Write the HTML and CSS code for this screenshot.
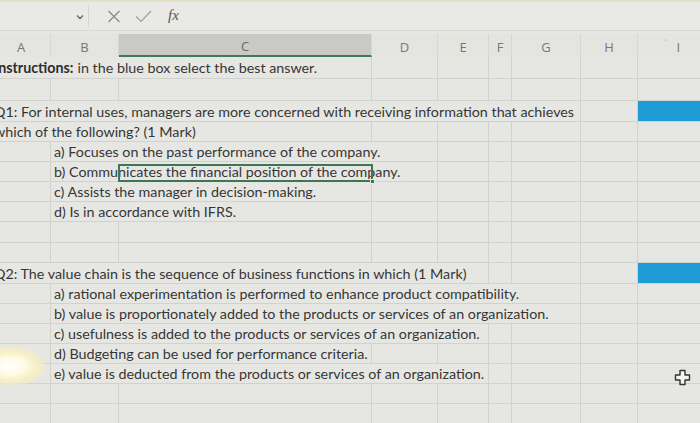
FILE: index.html
```html
<!DOCTYPE html>
<html>
<head>
<meta charset="utf-8">
<link rel="stylesheet" href="styles.css">
</head>
<body>
<div class="screen">
  <div class="fbar">
    <div class="namebox"><span class="chev"><svg width="8" height="6" viewBox="0 0 8 6"><path d="M1 1.5 L4 4.5 L7 1.5" fill="none" stroke="#666" stroke-width="1.3"/></svg></span></div>
    <div class="fsep"></div>
    <div class="ficons">
      <svg class="ico" width="14" height="13" viewBox="0 0 14 13"><path d="M1.5 1 L12.5 12 M12.5 1 L1.5 12" stroke="#8a8a8a" stroke-width="1.2" fill="none"/></svg>
      <svg class="ico" width="17" height="13" viewBox="0 0 17 13"><path d="M1 6.5 L6 11.5 L16 1" stroke="#a0a0a0" stroke-width="1.2" fill="none"/></svg>
      <span class="fx">fx</span>
    </div>
  </div>
  <div class="hdr">
    <div class="h">A</div><div class="h">B</div><div class="h sel">C</div><div class="h">D</div><div class="h">E</div><div class="h">F</div><div class="h">G</div><div class="h">H</div><div class="h"><span class="tick">&#8216;</span>I</div>
  </div>
  <div class="sheet">
    <div class="row r22"><div class="c ac pa"><b>Instructions:</b> in the blue box select the best answer.</div><div class="c"></div><div class="c"></div><div class="c"></div><div class="c"></div><div class="c"></div><div class="c"></div></div>
    <div class="row r22"><div class="c"></div><div class="c"></div><div class="c"></div><div class="c"></div><div class="c"></div><div class="c"></div><div class="c"></div><div class="c"></div><div class="c"></div></div>
    <div class="row r21"><div class="c ag pa">Q1: For internal uses, managers are more concerned with receiving information that achieves</div><div class="c"></div><div class="c blue"></div></div>
    <div class="row r20"><div class="c ac pa">which of the following? (1 Mark)</div><div class="c"></div><div class="c"></div><div class="c"></div><div class="c"></div><div class="c"></div><div class="c"></div></div>
    <div class="row r20"><div class="c"></div><div class="c bd pb">a) Focuses on the past performance of the company.</div><div class="c"></div><div class="c"></div><div class="c"></div><div class="c"></div><div class="c"></div></div>
    <div class="row r20"><div class="c"></div><div class="c bd pb">b) Communicates the financial position of the company.</div><div class="selbox"><span class="handle"></span></div><div class="c"></div><div class="c"></div><div class="c"></div><div class="c"></div><div class="c"></div></div>
    <div class="row r20"><div class="c"></div><div class="c bc pb">c) Assists the manager in decision-making.</div><div class="c"></div><div class="c"></div><div class="c"></div><div class="c"></div><div class="c"></div><div class="c"></div></div>
    <div class="row r20"><div class="c"></div><div class="c bc pb">d) Is in accordance with IFRS.</div><div class="c"></div><div class="c"></div><div class="c"></div><div class="c"></div><div class="c"></div><div class="c"></div></div>
    <div class="row r21"><div class="c"></div><div class="c"></div><div class="c"></div><div class="c"></div><div class="c"></div><div class="c"></div><div class="c"></div><div class="c"></div><div class="c"></div></div>
    <div class="row r20"><div class="c"></div><div class="c"></div><div class="c"></div><div class="c"></div><div class="c"></div><div class="c"></div><div class="c"></div><div class="c"></div><div class="c"></div></div>
    <div class="row r21"><div class="c ae pa">Q2: The value chain is the sequence of business functions in which (1 Mark)</div><div class="c"></div><div class="c"></div><div class="c"></div><div class="c blue"></div></div>
    <div class="row r20"><div class="c"></div><div class="c bg pb">a) rational experimentation is performed to enhance product compatibility.</div><div class="c"></div><div class="c"></div></div>
    <div class="row r20"><div class="c"></div><div class="c bg pb">b) value is proportionately added to the products or services of an organization.</div><div class="c"></div><div class="c"></div></div>
    <div class="row r20"><div class="c"></div><div class="c be pb">c) usefulness is added to the products or services of an organization.</div><div class="c"></div><div class="c"></div><div class="c"></div><div class="c"></div></div>
    <div class="row r20"><div class="c"></div><div class="c bc pb">d) Budgeting can be used for performance criteria.</div><div class="c"></div><div class="c"></div><div class="c"></div><div class="c"></div><div class="c"></div><div class="c"></div></div>
    <div class="row r20"><div class="c"></div><div class="c be pb">e) value is deducted from the products or services of an organization.</div><div class="c"></div><div class="c"></div><div class="c"></div><div class="c"></div></div>
    <div class="row r20"><div class="c"></div><div class="c"></div><div class="c"></div><div class="c"></div><div class="c"></div><div class="c"></div><div class="c"></div><div class="c"></div><div class="c"></div></div>
    <div class="row r20"><div class="c"></div><div class="c"></div><div class="c"></div><div class="c"></div><div class="c"></div><div class="c"></div><div class="c"></div><div class="c"></div><div class="c"></div></div>
    <div class="row r20"><div class="c"></div><div class="c"></div><div class="c"></div><div class="c"></div><div class="c"></div><div class="c"></div><div class="c"></div><div class="c"></div><div class="c"></div></div>
  </div>
  <div class="glare"></div>
  <svg class="cursor" width="17" height="17" viewBox="0 0 17 17"><path d="M6 1.5 H11 V6 H15.5 V11 H11 V15.5 H6 V11 H1.5 V6 H6 Z" fill="#f4f4f2" stroke="#333" stroke-width="1.4" stroke-linejoin="round"/></svg>
</div>
</body>
</html>
```
FILE: styles.css
```css
* { box-sizing: border-box; }
html, body { margin: 0; padding: 0; }
body {
  width: 700px;
  height: 423px;
  overflow: hidden;
  background: #e6e7e3;
  font-family: Lato, "Open Sans", sans-serif;
}
.screen {
  position: relative;
  width: 700px;
  height: 423px;
  overflow: hidden;
  background: #e6e7e3;
}
.fbar {
  height: 31px;
  display: flex;
  align-items: center;
  background: #e9e9e6;
  border-bottom: 1px solid #d9d9d5;
  border-top: 2px solid #e4e2c8;
}
.namebox {
  width: 88px;
  height: 100%;
  display: flex;
  align-items: center;
  justify-content: flex-end;
  padding-right: 4px;
}
.chev { display: flex; margin-top: 1px; }
.fsep { width: 1px; height: 22px; background: #d4d4d0; }
.ficons {
  display: flex;
  align-items: center;
  padding-left: 18px;
  gap: 14px;
}
.fx {
  font-family: "Liberation Serif", serif;
  font-style: italic;
  font-size: 15px;
  color: #555;
  margin-left: 2px;
  margin-top: -2px;
}
.hdr {
  margin-top: 3px;
  margin-left: -8px;
  height: 23px;
  display: grid;
  grid-template-columns: 59px 68px 253px 66px 51px 23px 69px 57px 70px;
  background: #e4e4e1;
}
.h {
  display: flex;
  align-items: center;
  justify-content: center;
  font-family: "Open Sans", sans-serif;
  font-size: 13px;
  color: #777;
  border-right: 1px solid #d6d6d2;
  padding-top: 2px;
  position: relative;
}
.h.sel {
  background: #c9cac5;
  border-bottom: 2px solid #3f7a57;
  color: #666;
}
.tick { font-size: 9px; color: #aaa; margin-right: 10px; margin-top: -8px; }
.sheet { margin-left: -8px; }
.row {
  display: grid;
  grid-template-columns: 59px 68px 253px 66px 51px 23px 69px 57px 70px;
  border-bottom: 1px solid #d1d2cd;
}
.r22 { height: 22px; }
.r21 { height: 21px; }
.r20 { height: 20px; }
.c {
  border-right: 1px solid #d1d2cd;
  font-size: 14.3px;
  color: #363636;
  white-space: nowrap;
  display: flex;
  align-items: center;
  grid-row: 1;
  overflow: visible;
}
.c b { font-weight: 700; color: #2f2f2f; margin-right: 4px; }
.pa { padding-left: 2px; }
.pb { padding-left: 3px; }
.ac { grid-column: 1 / 4; }
.ag { grid-column: 1 / 8; }
.ae { grid-column: 1 / 6; }
.bd { grid-column: 2 / 5; }
.bc { grid-column: 2 / 4; }
.bg { grid-column: 2 / 8; }
.be { grid-column: 2 / 6; }
.blue { background: #1f9cd6; border-right: none; }
.selbox {
  grid-column: 3 / 4;
  grid-row: 1;
  border: 2px solid #3e7653;
  margin: 2px -1px -1px -1px;
  position: relative;
}
.handle {
  position: absolute;
  right: -4px;
  bottom: -4px;
  width: 5px;
  height: 5px;
  background: #3e7653;
  border: 1px solid #e6e7e3;
}
.glare {
  position: absolute;
  left: -26px;
  top: 346px;
  width: 72px;
  height: 40px;
  border-radius: 50%;
  background: radial-gradient(ellipse at center, #ffffff 0%, #fffbe6 30%, #f8f0c4 50%, rgba(236,232,205,0.5) 72%, rgba(230,231,227,0) 100%);
}
.cursor {
  position: absolute;
  left: 674px;
  top: 369px;
}
```
